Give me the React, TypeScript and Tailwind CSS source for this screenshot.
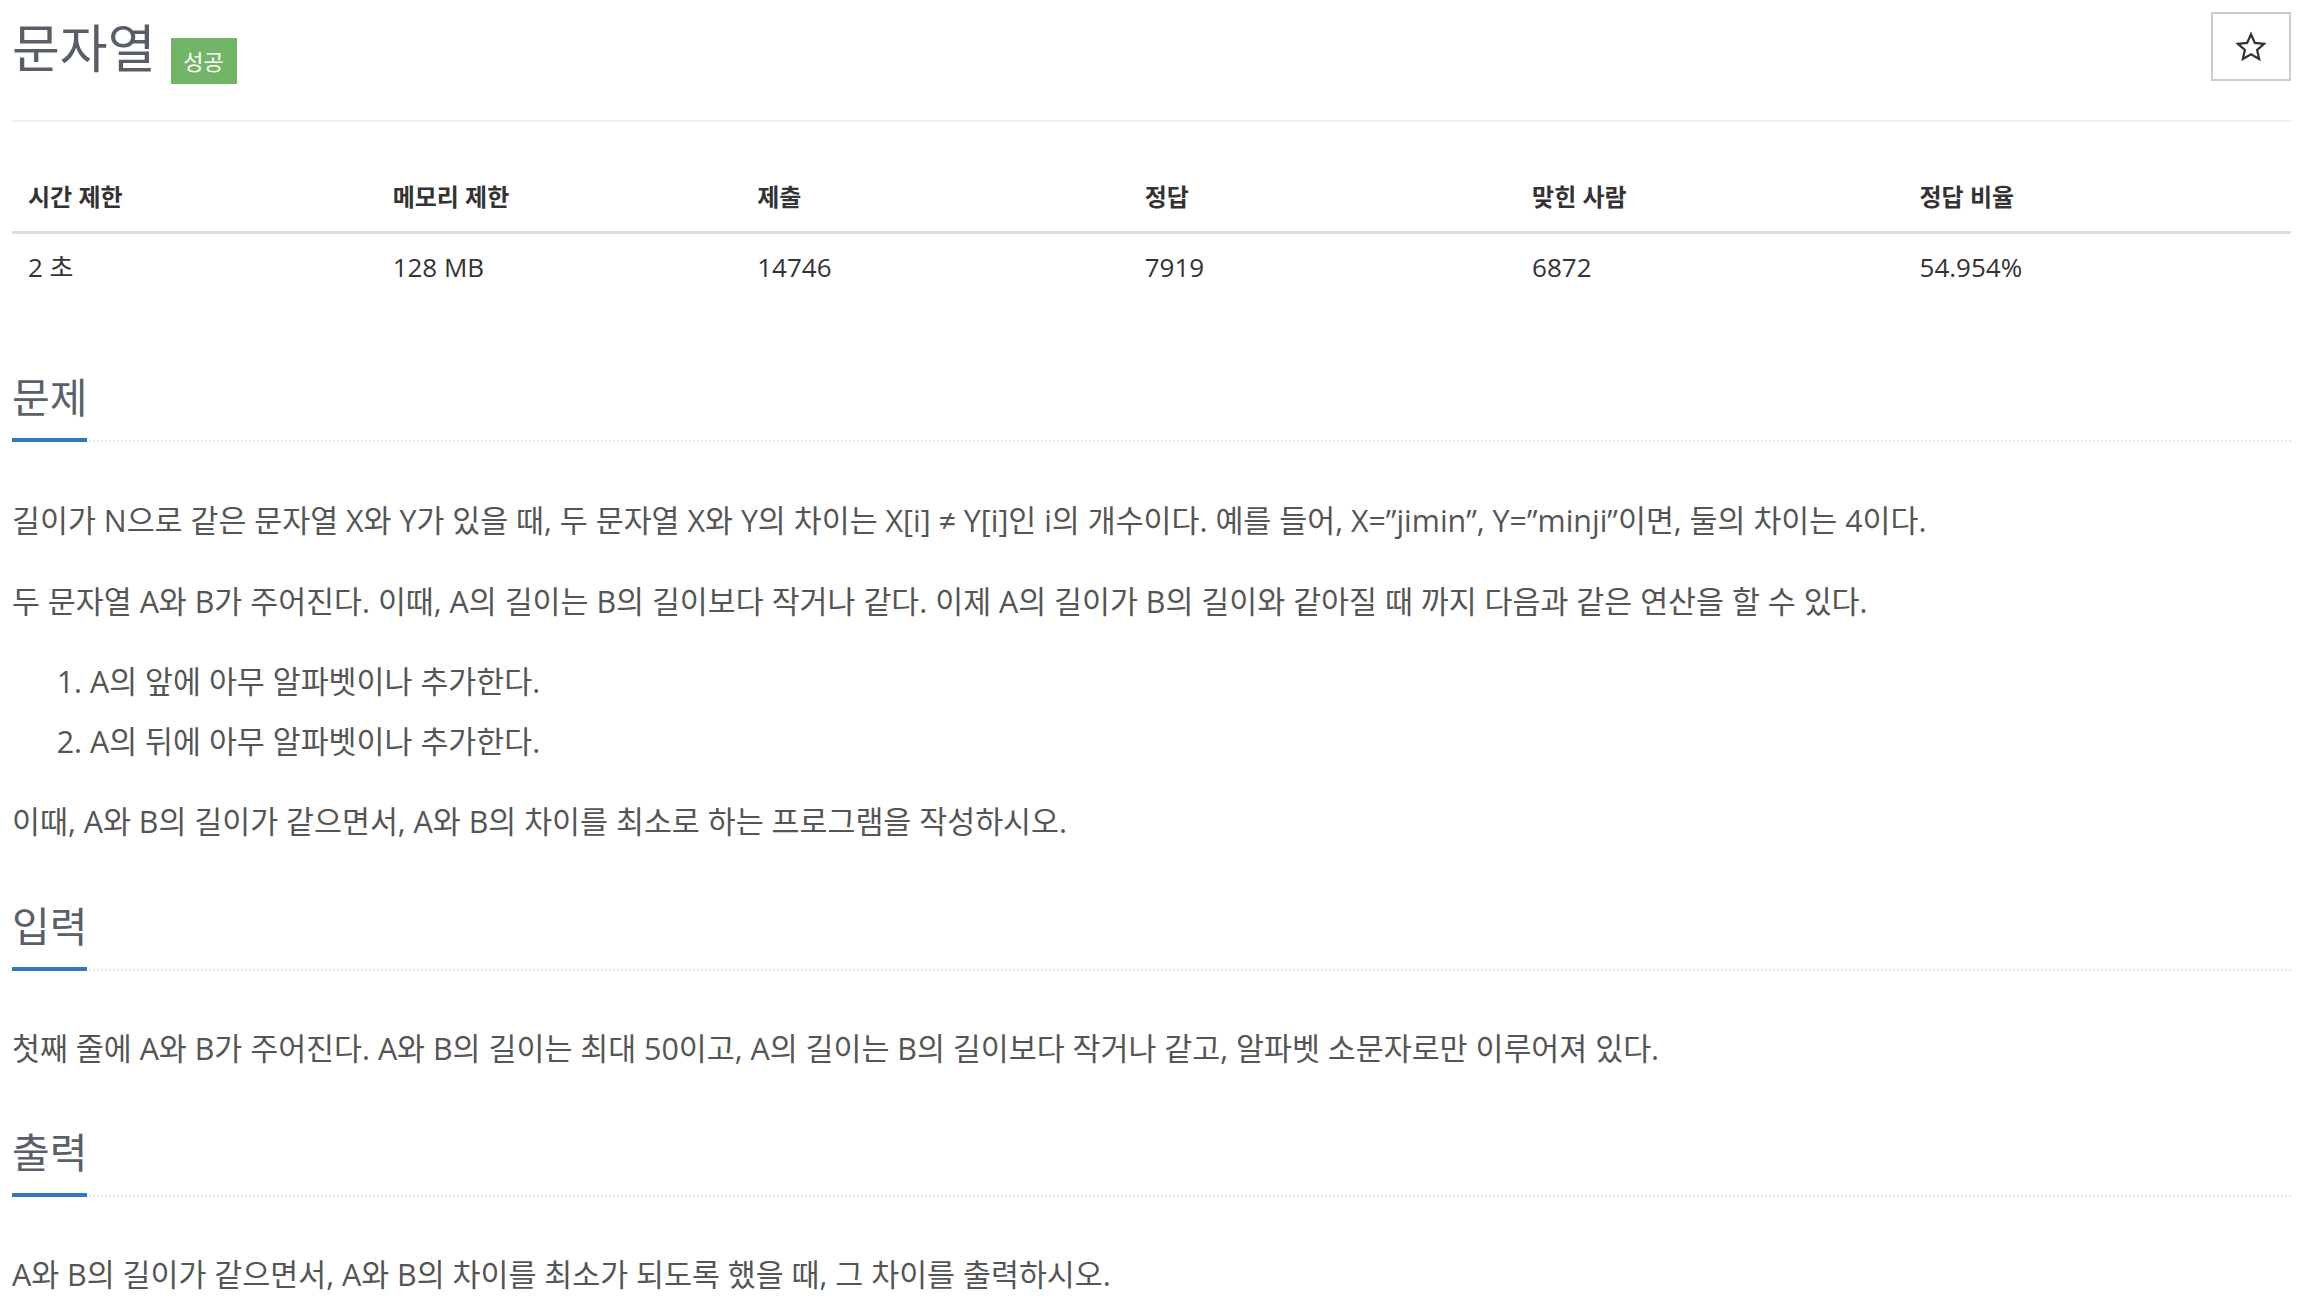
import React from "react";

const font = "font-['Open_Sans','Noto_Sans_CJK_KR',sans-serif]";

function Headline({ title }: { title: string }) {
  return (
    <div className="border-b-2 border-dotted border-[#e4e9f0]">
      <h2 className="inline-block -mb-[2px] border-b-4 border-[#3477c1] pt-[2px] pb-[20px] text-[41px] leading-[42px] font-normal text-[#5a606a]">
        {title}
      </h2>
    </div>
  );
}

function StarIcon() {
  return (
    <svg width="32" height="32" viewBox="0 0 24 24" fill="none" stroke="#333333" strokeWidth="1.7" strokeLinejoin="miter">
      <polygon points="12,2.5 14.9,8.9 21.8,9.6 16.6,14.2 18.1,21 12,17.5 5.9,21 7.4,14.2 2.2,9.6 9.1,8.9" />
    </svg>
  );
}

export default function App() {
  const heads = ["시간 제한", "메모리 제한", "제출", "정답", "맞힌 사람", "정답 비율"];
  const vals = ["2 초", "128 MB", "14746", "7919", "6872", "54.954%"];
  return (
    <div className={`${font} bg-white min-h-screen`}>
      <div className="ml-[12px] mr-[13px] pt-[12px]">
        {/* Header */}
        <div className="flex items-start justify-between">
          <div className="flex items-start">
            <h1 className="mt-[6px] text-[52px] leading-[60px] font-normal text-[#585e68]">문자열</h1>
            <span className="ml-[15px] mt-[26px] flex h-[46px] w-[66px] items-center justify-center bg-[#72b566] text-[22px] leading-none text-white">
              성공
            </span>
          </div>
          <button className="flex h-[69px] w-[80px] items-center justify-center border-2 border-[#cccccc] bg-white">
            <StarIcon />
          </button>
        </div>
        <div className="mt-[36px] h-[2px] bg-[#eeeeee]" />

        {/* Table */}
        <div className="mt-[48px]">
          <div className="grid grid-cols-[16%_16%_17%_17%_17%_17%] border-b-[3px] border-[#dddddd]">
            {heads.map((h) => (
              <div key={h} className="px-[16px] pt-[12px] pb-[19px] text-[24px] leading-[30px] font-bold text-[#333333]">
                {h}
              </div>
            ))}
          </div>
          <div className="grid grid-cols-[16%_16%_17%_17%_17%_17%]">
            {vals.map((v) => (
              <div key={v} className="px-[16px] pt-[18px] text-[26px] leading-[30px] text-[#333333]">
                {v}
              </div>
            ))}
          </div>
        </div>

        {/* 문제 */}
        <section className="mt-[92px]">
          <Headline title="문제" />
          <div className="mt-[56px] text-[30.4px] leading-[45px] text-[#555555]">
            <p className="mb-[36px]">
              길이가 N으로 같은 문자열 X와 Y가 있을 때, 두 문자열 X와 Y의 차이는 X[i] ≠ Y[i]인 i의 개수이다. 예를 들어, X=”jimin”, Y=”minji”이면, 둘의 차이는 4이다.
            </p>
            <p className="mb-[36px]">
              두 문자열 A와 B가 주어진다. 이때, A의 길이는 B의 길이보다 작거나 같다. 이제 A의 길이가 B의 길이와 같아질 때 까지 다음과 같은 연산을 할 수 있다.
            </p>
            <ol className="-mt-[1px] mb-[35px] list-decimal pl-[78px] space-y-[15px]">
              <li>A의 앞에 아무 알파벳이나 추가한다.</li>
              <li>A의 뒤에 아무 알파벳이나 추가한다.</li>
            </ol>
            <p className="mb-[36px]">이때, A와 B의 길이가 같으면서, A와 B의 차이를 최소로 하는 프로그램을 작성하시오.</p>
          </div>
        </section>

        {/* 입력 */}
        <section className="mt-[59px]">
          <Headline title="입력" />
          <div className="mt-[55px] text-[30.4px] leading-[45px] text-[#555555]">
            <p className="mb-[36px]">
              첫째 줄에 A와 B가 주어진다. A와 B의 길이는 최대 50이고, A의 길이는 B의 길이보다 작거나 같고, 알파벳 소문자로만 이루어져 있다.
            </p>
          </div>
        </section>

        {/* 출력 */}
        <section className="mt-[58px]">
          <Headline title="출력" />
          <div className="mt-[55px] text-[30.4px] leading-[45px] text-[#555555]">
            <p className="mb-[36px]">A와 B의 길이가 같으면서, A와 B의 차이를 최소가 되도록 했을 때, 그 차이를 출력하시오.</p>
          </div>
        </section>
      </div>
    </div>
  );
}
